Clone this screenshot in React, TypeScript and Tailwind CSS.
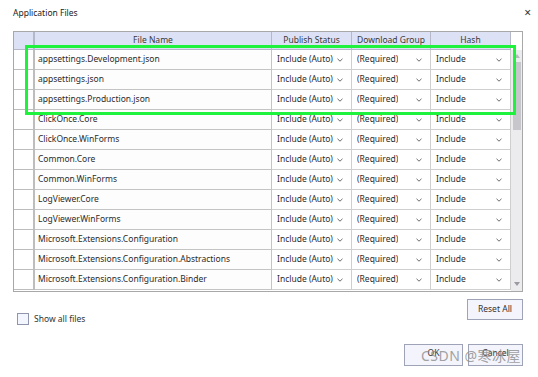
import React from "react";

const files = [
  "appsettings.Development.json",
  "appsettings.json",
  "appsettings.Production.json",
  "ClickOnce.Core",
  "ClickOnce.WinForms",
  "Common.Core",
  "Common.WinForms",
  "LogViewer.Core",
  "LogViewer.WinForms",
  "Microsoft.Extensions.Configuration",
  "Microsoft.Extensions.Configuration.Abstractions",
  "Microsoft.Extensions.Configuration.Binder",
];

function Chevron() {
  return (
    <svg width="6" height="4" viewBox="0 0 6 4" className="shrink-0">
      <path d="M0.5 0.8 L3 3.2 L5.5 0.8" fill="none" stroke="#6b6b6b" strokeWidth="1" />
    </svg>
  );
}

function Combo({ value }: { value: string }) {
  return (
    <div className="flex items-center justify-between h-full pl-[5px] pr-[8px] border-r border-b border-[#cfcfcf] bg-white">
      <span className="truncate">{value}</span>
      <Chevron />
    </div>
  );
}

export default function App() {
  return (
    <div
      className="w-[538px] h-[377px] bg-white relative overflow-hidden text-[#2b2b2b] text-[8.5px]"
      style={{ fontFamily: '"Noto Sans", "Noto Sans CJK SC", sans-serif' }}
    >
      {/* Title bar */}
      <div className="flex justify-between items-center h-[26px] pl-[13px] pr-[7px]">
        <span className="text-[8.5px] text-[#222]">Application Files</span>
        <span className="text-[12px] text-[#333] leading-none">×</span>
      </div>

      {/* Grid */}
      <div className="ml-[13px] mt-[5px] w-[510px] h-[261px] border border-[#a8a8a8] flex">
        <div className="w-[497px] flex flex-col">
          <div className="grid grid-cols-[21px_237px_80px_79px_80px] h-[18px] bg-[#dde1f5] text-[#3a3a3a]">
            <div className="border-r-2 border-b border-[#b4b8c8]" />
            <div className="flex items-center justify-center border-r border-b border-[#b4b8c8]">File Name</div>
            <div className="flex items-center justify-center border-r border-b border-[#b4b8c8]">Publish Status</div>
            <div className="flex items-center justify-center border-r border-b border-[#b4b8c8]">Download Group</div>
            <div className="flex items-center justify-center border-r border-b border-[#b4b8c8]">Hash</div>
          </div>
          {files.map((f) => (
            <div key={f} className="grid grid-cols-[21px_237px_80px_79px_80px] h-[20px]">
              <div className="border-r-2 border-b border-[#bdbdbd] bg-white" />
              <div className="flex items-center pl-[3px] border-r border-b border-[#c4c4c4] bg-[#fdfdfd]">{f}</div>
              <Combo value="Include (Auto)" />
              <Combo value="(Required)" />
              <Combo value="Include" />
            </div>
          ))}
        </div>
        {/* Scrollbar */}
        <div className="w-[12px] flex flex-col">
          <div className="h-[18px] bg-white" />
          <div className="flex-1 flex flex-col items-center bg-[#ececef]">
            <div className="h-[12px] flex items-center justify-center">
              <svg width="6" height="4" viewBox="0 0 6 4"><path d="M0 4 L3 0 L6 4 Z" fill="#b8b8bf" /></svg>
            </div>
            <div className="w-[8px] h-[68px] bg-[#c6c6cc]" />
            <div className="flex-1" />
            <div className="h-[14px] flex items-center justify-center">
              <svg width="6" height="4" viewBox="0 0 6 4"><path d="M0 0 L3 4 L6 0 Z" fill="#9a9aa3" /></svg>
            </div>
          </div>
        </div>
      </div>

      {/* Options row */}
      <div className="flex justify-between items-start ml-[17px] mr-[15px] mt-[7px] h-[27px]">
        <label className="flex items-center gap-[5px] mt-[14px]">
          <span className="w-[12px] h-[12px] border border-[#8e95ad] bg-[#f4f6ff]" />
          <span className="text-[#333]">Show all files</span>
        </label>
        <button className="w-[56px] h-[21px] border border-[#9ea3b8] bg-[#f3f4fc] text-[#333]">Reset All</button>
      </div>

      {/* Dialog buttons */}
      <div className="flex justify-end gap-[5px] mr-[15px] mt-[18px]">
        <button className="w-[59px] h-[22px] border border-[#9ea3b8] bg-[#f3f4fc] text-[#333] flex items-start justify-center pt-[2px]">OK</button>
        <button className="w-[55px] h-[22px] border border-[#9ea3b8] bg-[#f3f4fc] text-[#333] flex items-start justify-center pt-[2px]">Cancel</button>
      </div>

      {/* Highlight annotation */}
      <div className="absolute left-[25px] top-[45px] w-[491px] h-[70px] border-[3px] border-[#1ff23c]" />

      {/* Watermark */}
      <div className="absolute left-[421px] top-[349px] text-[14px] text-[#8a8a8a]/80 leading-none tracking-[0.5px]">
        CSDN @寒冰屋
      </div>
    </div>
  );
}
